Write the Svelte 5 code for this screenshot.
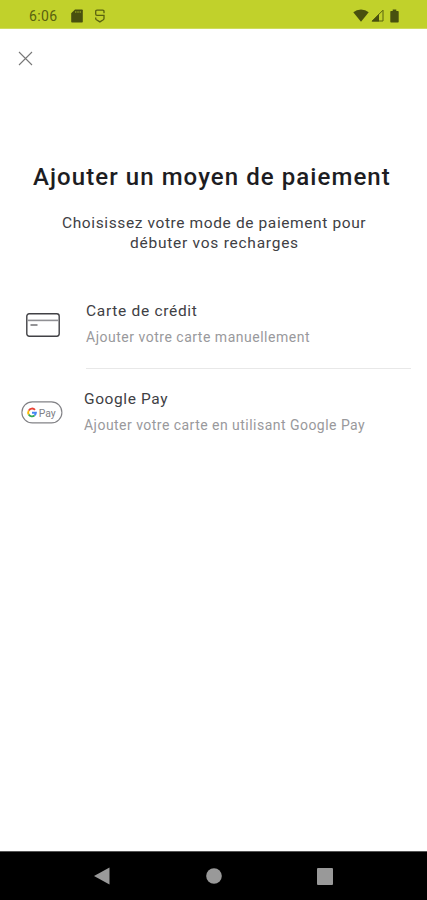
<script lang="ts">
  interface PaymentMethod {
    id: string;
    title: string;
    hint: string;
  }

  const methods: PaymentMethod[] = [
    { id: 'card', title: 'Carte de crédit', hint: 'Ajouter votre carte manuellement' },
    { id: 'gpay', title: 'Google Pay', hint: 'Ajouter votre carte en utilisant Google Pay' },
  ];
</script>

<div class="screen">
  <header class="status-bar">
    <span class="time">6:06</span>
    <svg class="sd" width="12" height="14" viewBox="0 0 12 14">
      <path d="M4 0.5h7q.8 0 .8.8v11.4q0 .8-.8.8H1q-.8 0-.8-.8V4.3z" fill="#48500f" />
      <path d="M4.8 2v2M7 2v2M9.2 2v2" stroke="#8f9d20" stroke-width="1" />
    </svg>
    <svg class="sync" width="12" height="14" viewBox="0 0 12 14" fill="none" stroke="#59620f" stroke-width="1.3">
      <path d="M10 4.2V2.5Q10 1.2 8.7 1.2H3Q1.7 1.2 1.7 2.5v2.6q0 1.3 1.3 1.3h7v3.2q0 .7-.7 1.2L5.9 12.9 2.4 10.8q-.7-.5-.7-1.2V8.4" />
    </svg>
    <span class="spacer"></span>
    <svg class="wifi" width="16" height="13" viewBox="0 0 16 13">
      <path d="M0.3 3.3Q3.5.5 8 .5t7.7 2.8L8 12.7z" fill="#48500f" />
    </svg>
    <svg class="signal" width="13" height="13" viewBox="0 0 13 13">
      <path d="M12 1.2V12H1.2z" fill="none" stroke="#59620f" />
      <path d="M8 5v7.5H.5z" fill="#48500f" />
    </svg>
    <svg class="battery" width="9" height="14" viewBox="0 0 9 14">
      <path d="M2.7.5h3.6V2H8q.7 0 .7.7v10q0 .8-.7.8H1q-.7 0-.7-.8v-10Q.3 2 1 2h1.7z" fill="#48500f" />
    </svg>
  </header>

  <main>
    <button type="button" class="close" aria-label="Fermer">
      <svg width="15" height="15" viewBox="0 0 15 15">
        <path d="M1 1l13 13M14 1L1 14" stroke="#777" stroke-width="1.1" />
      </svg>
    </button>

    <h1>Ajouter un moyen de paiement</h1>
    <p class="intro">
      <span class="line first">Choisissez votre mode de paiement pour</span>
      <span class="line second">débuter vos recharges</span>
    </p>

    <ul>
      {#each methods as method (method.id)}
        <li class={method.id}>
          <span class="icon">
            {#if method.id === 'card'}
              <svg width="34" height="24" viewBox="0 0 34 24" fill="none">
                <rect x="0.8" y="0.8" width="32.4" height="22.4" rx="2.4" stroke="#414145" stroke-width="1.4" />
                <path d="M1.5 7.4h31" stroke="#909094" stroke-width="1.6" />
                <path d="M4.5 12h7" stroke="#66666a" stroke-width="1.4" />
              </svg>
            {:else}
              <svg width="42" height="23" viewBox="0 0 42 23" fill="none">
                <rect x="0.9" y="0.9" width="40" height="21" rx="10.5" stroke="#828286" stroke-width="1.1" />
                <g stroke-width="1.9">
                  <path d="M14 8.8A3.9 3.9 0 0 0 7.7 9.6" stroke="#ea4335" />
                  <path d="M7.7 9.6a3.9 3.9 0 0 0 0 3.9" stroke="#fbbc04" />
                  <path d="M7.7 13.5a3.9 3.9 0 0 0 5.9.9" stroke="#34a853" />
                  <path d="M13.6 14.4a3.9 3.9 0 0 0 1.3-2.7H11" stroke="#4285f4" />
                </g>
                <text x="17.8" y="15.6" textLength="17" lengthAdjust="spacingAndGlyphs">Pay</text>
              </svg>
            {/if}
          </span>
          <span class="label">
            <span class="title">{method.title}</span>
            <span class="hint">{method.hint}</span>
          </span>
        </li>
      {/each}
    </ul>
  </main>

  <nav>
    <svg width="16" height="18" viewBox="0 0 16 18"><path d="M0 9L15.5 .4v17.2z" fill="#999" /></svg>
    <svg width="16" height="16" viewBox="0 0 16 16"><circle cx="8" cy="8" r="7.8" fill="#999" /></svg>
    <svg width="16" height="17" viewBox="0 0 16 17"><rect width="16" height="17" rx="1" fill="#999" /></svg>
  </nav>
</div>

<style>
  .screen {
    width: 427px;
    height: 900px;
    display: flex;
    flex-direction: column;
    overflow: hidden;
    background: #fff;
    font-family: Roboto, 'Noto Sans', sans-serif;
    color: #1d1d22;
  }

  .status-bar {
    box-sizing: border-box;
    height: 29px;
    flex: none;
    display: flex;
    align-items: center;
    padding: 3px 28px 0 29px;
    background: #c1d12b;
    border-bottom: 1px solid #cfdc5c;
  }

  .time {
    width: 42px;
    font-size: 14px;
    letter-spacing: 0.4px;
    color: #59620f;
  }

  .sync {
    margin-left: 11px;
  }

  .spacer {
    flex: 1;
  }

  .signal {
    margin-left: 2px;
  }

  .battery {
    margin-left: 6px;
  }

  main {
    flex: 1;
    display: flex;
    flex-direction: column;
  }

  .close {
    width: 15px;
    height: 15px;
    margin: 22px 0 0 18px;
    padding: 0;
    border: 0;
    background: none;
    line-height: 0;
  }

  h1 {
    margin: 95px 0 0 33px;
    font-size: 24px;
    font-weight: 500;
    line-height: 32px;
    letter-spacing: 1.07px;
    white-space: nowrap;
  }

  .intro {
    margin: 20px 0 0;
  }

  .line {
    display: block;
    font-size: 15.5px;
    line-height: 20px;
    white-space: nowrap;
    color: #404044;
  }

  .first {
    margin-left: 62px;
    letter-spacing: 0.61px;
  }

  .second {
    margin-left: 130px;
    letter-spacing: 0.75px;
  }

  ul {
    margin: 34px 0 0;
    padding: 0;
    list-style: none;
  }

  li {
    display: flex;
    padding-left: 21px;
  }

  .icon {
    width: 65px;
    display: flex;
    align-items: flex-start;
  }

  .card .icon svg {
    margin: 26px 0 0 5px;
  }

  .gpay .icon {
    width: 63px;
  }

  .gpay .icon svg {
    margin-top: 32px;
  }

  .icon text {
    font-size: 11px;
    fill: #808085;
  }

  .label {
    box-sizing: border-box;
    width: 325px;
    height: 82px;
    display: flex;
    flex-direction: column;
    padding-top: 14px;
  }

  .card .label {
    border-bottom: 1px solid #e8e8e8;
  }

  .gpay .label {
    padding-top: 20px;
  }

  .title {
    font-size: 15.5px;
    line-height: 20px;
    letter-spacing: 0.7px;
    color: #404044;
  }

  .gpay .title {
    letter-spacing: 0.6px;
  }

  .hint {
    margin-top: 6px;
    font-size: 14px;
    line-height: 20px;
    letter-spacing: 0.51px;
    white-space: nowrap;
    color: #99999c;
  }

  .gpay .hint {
    letter-spacing: 0.47px;
  }

  nav {
    box-sizing: border-box;
    height: 49px;
    flex: none;
    display: flex;
    align-items: center;
    justify-content: space-between;
    padding: 0 94px;
    background: #000;
    border-top: 1px solid #555;
  }
</style>
